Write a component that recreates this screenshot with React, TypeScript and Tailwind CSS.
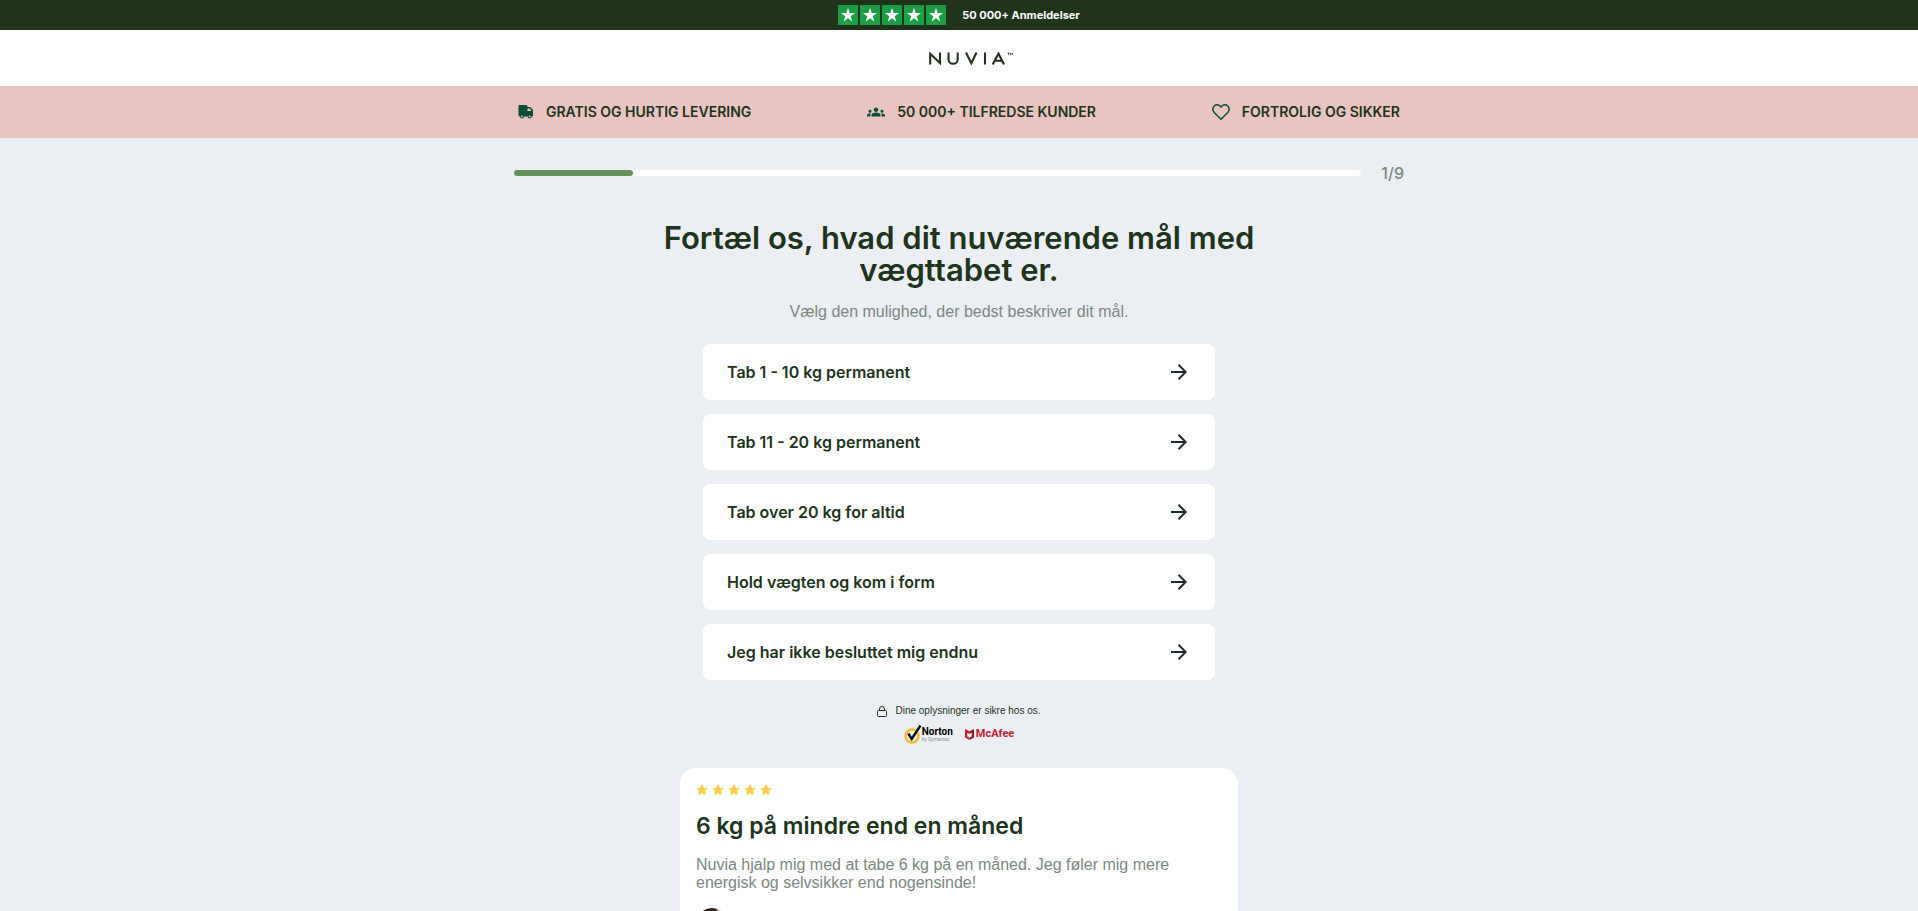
import React from "react";
import { MdGroups } from "react-icons/md";

const options = [
  "Tab 1 - 10 kg permanent",
  "Tab 11 - 20 kg permanent",
  "Tab over 20 kg for altid",
  "Hold vægten og kom i form",
  "Jeg har ikke besluttet mig endnu",
];

const step = 1;
const steps = 9;
const progress = 14;

const TrustStar = () => (
  <svg viewBox="0 0 20 20" className="w-5 h-5" aria-hidden="true">
    <rect width="20" height="20" fill="#1c9f44" />
    <path
      d="M10 3l1.7 5.1H17l-4.3 3.2 1.6 5.2L10 13.300l-4.300 3.200 1.600-5.200L3 8.100h5.300z"
      fill="#fff"
    />
  </svg>
);

const TruckIcon = () => (
  <svg viewBox="0 0 16 14" className="w-4 h-[14px]" fill="#064e35" aria-hidden="true">
    <path
      fillRule="evenodd"
      d="M1.500 0H8a1.500 1.500 0 0 1 1.500 1.500V2h2.200c.5 0 .9.2 1.200.5l1.700 2c.3.3.4.7.4 1.100V10.500c0 .6-.5 1-1 1h-.3a2 2 0 0 1-4 0H6a2 2 0 0 1-4 0h-.5A1.500 1.500 0 0 1 .5 10V1.500C.5.700.8 0 1.500 0zM9.500 3.500V6H13.300V5.500L11.700 3.500zM4 10.600a.9.9 0 1 0 0 1.800.9.9 0 0 0 0-1.800zm7.700 0a.9.9 0 1 0 0 1.800.9.9 0 0 0 0-1.800z"
    />
  </svg>
);

const HeartIcon = () => (
  <svg viewBox="0 0 18 16" className="w-[18px] h-4" fill="none" stroke="#064e35" strokeWidth="1.500" strokeLinejoin="round" aria-hidden="true">
    <path d="M9 15.200L2.200 8.500C.4 6.600.5 3.600 2.200 2c1.800-1.700 4.500-1.500 6 .2L9 3.100l.8-.9c1.500-1.700 4.200-1.900 6-.2 1.700 1.600 1.800 4.600 0 6.500z" />
  </svg>
);

const ArrowIcon = () => (
  <svg viewBox="0 0 16 16" className="w-4 h-4" fill="none" stroke="#1f2a30" strokeWidth="2" aria-hidden="true">
    <path d="M0 8h15M7.500 .8L14.700 8l-7.200 7.200" />
  </svg>
);

const LockIcon = () => (
  <svg viewBox="0 0 10 11" className="w-[10px] h-[11px]" fill="none" stroke="#22331c" strokeLinejoin="round" aria-hidden="true">
    <rect x=".5" y="4.500" width="9" height="6" rx="1" />
    <path d="M2.500 4.500V3a2.500 2.500 0 0 1 5 0v1.500" />
  </svg>
);

const RatingStar = () => (
  <svg viewBox="0 0 12 12" className="w-3 h-3" fill="#fbce4f" stroke="#fbce4f" strokeWidth="1.300" strokeLinejoin="round" aria-hidden="true">
    <path d="M6 1.200l1.400 3 3.200.4-2.300 2.200.6 3.300L6 8.500l-2.900 1.600.6-3.300L1.400 4.600l3.200-.4z" />
  </svg>
);

const NuviaLogo = () => (
  <svg viewBox="0 0 84 13" className="w-[84px] h-[13px]" fill="none" stroke="#22331c" strokeWidth="2.100" role="img" aria-label="Nuvia">
    <path d="M1.200 12.500V1.800L11 11V.5" />
    <path d="M19.500 .5v6.700a4.600 4.600 0 0 0 9.200 0V.5" />
    <path d="M37 .5l5.300 10.800L47.500 .5" />
    <path d="M56 .5v12" />
    <path d="M63.700 12.500L69.500 1.600l5.500 10.900M66 8.800h7.200" />
    <path d="M78.500 1h2.200M79.600 1v2.200M81.500 3.200V1l.9 1.200.9-1.200v2.200" strokeWidth=".7" />
  </svg>
);

const NortonBadge = () => (
  <div className="flex items-center">
    <svg viewBox="0 0 18 20" className="w-[18px] h-5" fill="none" aria-hidden="true">
      <circle cx="8" cy="12" r="6.500" stroke="#fcb827" strokeWidth="2.500" />
      <path d="M4.300 9.500l3.400 5.500L16.500 1.500" stroke="#111" strokeWidth="2.400" />
    </svg>
    <div className="flex flex-col font-['Roboto',sans-serif]">
      <span className="text-[10px] leading-[10px] font-bold text-black">Norton</span>
      <span className="text-[5px] leading-[5px] text-[#8c9094]">by Symantec</span>
    </div>
  </div>
);

const McAfeeBadge = () => (
  <div className="flex items-center gap-[2px]">
    <svg viewBox="0 0 9 11" className="w-[9px] h-[11px]" aria-hidden="true">
      <path d="M0 0l4.500 2.200V5L2.200 3.800v3.700l2.300 1.200V11L0 8.500z" fill="#c8202f" />
      <path d="M9 0L4.500 2.200V5l2.300-1.200v3.700L4.500 8.700V11L9 8.500z" fill="#8f1722" />
    </svg>
    <span className="font-['Roboto',sans-serif] text-[11px] leading-3 font-bold text-[#c8202f]">McAfee</span>
  </div>
);

const App: React.FC = () => {
  return (
    <div className="h-screen overflow-hidden bg-[#ebeff4] text-[#20331b] font-['Inter','Liberation_Sans',sans-serif]">
      <div className="flex h-[30px] items-center justify-center gap-4 bg-[#20331b]">
        <div className="flex gap-[2px]">
          {[1, 2, 3, 4, 5].map((n) => (
            <TrustStar key={n} />
          ))}
        </div>
        <p className="text-[11px] leading-4 font-bold text-white">50 000+ Anmeldelser</p>
      </div>

      <header className="flex h-14 items-center justify-center bg-white pl-6">
        <NuviaLogo />
      </header>

      <section className="bg-[#eac4c1]">
        <ul className="mx-auto flex h-[52px] max-w-[890px] items-center justify-between px-1 text-sm font-semibold">
          <li className="flex items-center gap-3">
            <TruckIcon />
            GRATIS OG HURTIG LEVERING
          </li>
          <li className="flex items-center gap-3">
            <MdGroups size={18} color="#064e35" />
            50 000+ TILFREDSE KUNDER
          </li>
          <li className="flex items-center gap-3">
            <HeartIcon />
            FORTROLIG OG SIKKER
          </li>
        </ul>
      </section>

      <main>
        <div className="mx-auto flex h-[70px] max-w-[890px] items-center gap-5">
          <div className="h-[6px] flex-1 rounded-full bg-white">
            <div className="h-full rounded-full bg-[#649157]" style={{ width: `${progress}%` }} />
          </div>
          <span className="text-base font-medium text-[#7b8781]">
            {step}/{steps}
          </span>
        </div>

        <div className="mx-auto max-w-[620px] pt-[14px] text-center">
          <h1 className="text-[31px] leading-8 font-semibold">
            Fortæl os, hvad dit nuværende mål med vægttabet er.
          </h1>
          <p className="mt-4 font-['Liberation_Sans',sans-serif] text-base leading-5 text-[#7b8781]">
            Vælg den mulighed, der bedst beskriver dit mål.
          </p>
        </div>

        <div className="mx-auto mt-[22px] flex max-w-[512px] flex-col gap-[14px]">
          {options.map((option) => (
            <button
              key={option}
              type="button"
              className="flex h-14 items-center justify-between rounded-lg bg-white pr-7 pl-6 text-base font-semibold"
            >
              {option}
              <ArrowIcon />
            </button>
          ))}
        </div>

        <div className="mt-6 flex flex-col items-center gap-[6px]">
          <p className="flex items-center gap-2 font-['Liberation_Sans',sans-serif] text-[10px] leading-[14px]">
            <LockIcon />
            Dine oplysninger er sikre hos os.
          </p>
          <div className="flex items-center gap-3">
            <NortonBadge />
            <McAfeeBadge />
          </div>
        </div>

        <article className="mx-auto mt-6 max-w-[558px] rounded-2xl bg-white p-4">
          <div className="flex gap-1">
            {[1, 2, 3, 4, 5].map((n) => (
              <RatingStar key={n} />
            ))}
          </div>
          <h2 className="mt-4 text-[23px] leading-7 font-semibold">6 kg på mindre end en måned</h2>
          <p className="mt-4 font-['Liberation_Sans',sans-serif] text-base leading-[18px] text-[#7b8781]">
            Nuvia hjalp mig med at tabe 6 kg på en måned. Jeg føler mig mere energisk og selvsikker end nogensinde!
          </p>
          <div className="mt-4 h-8 w-8 rounded-full bg-linear-to-r from-[#2b211c] from-60% to-[#c9c3b8] to-70%" />
        </article>
      </main>
    </div>
  );
};

export default App;
